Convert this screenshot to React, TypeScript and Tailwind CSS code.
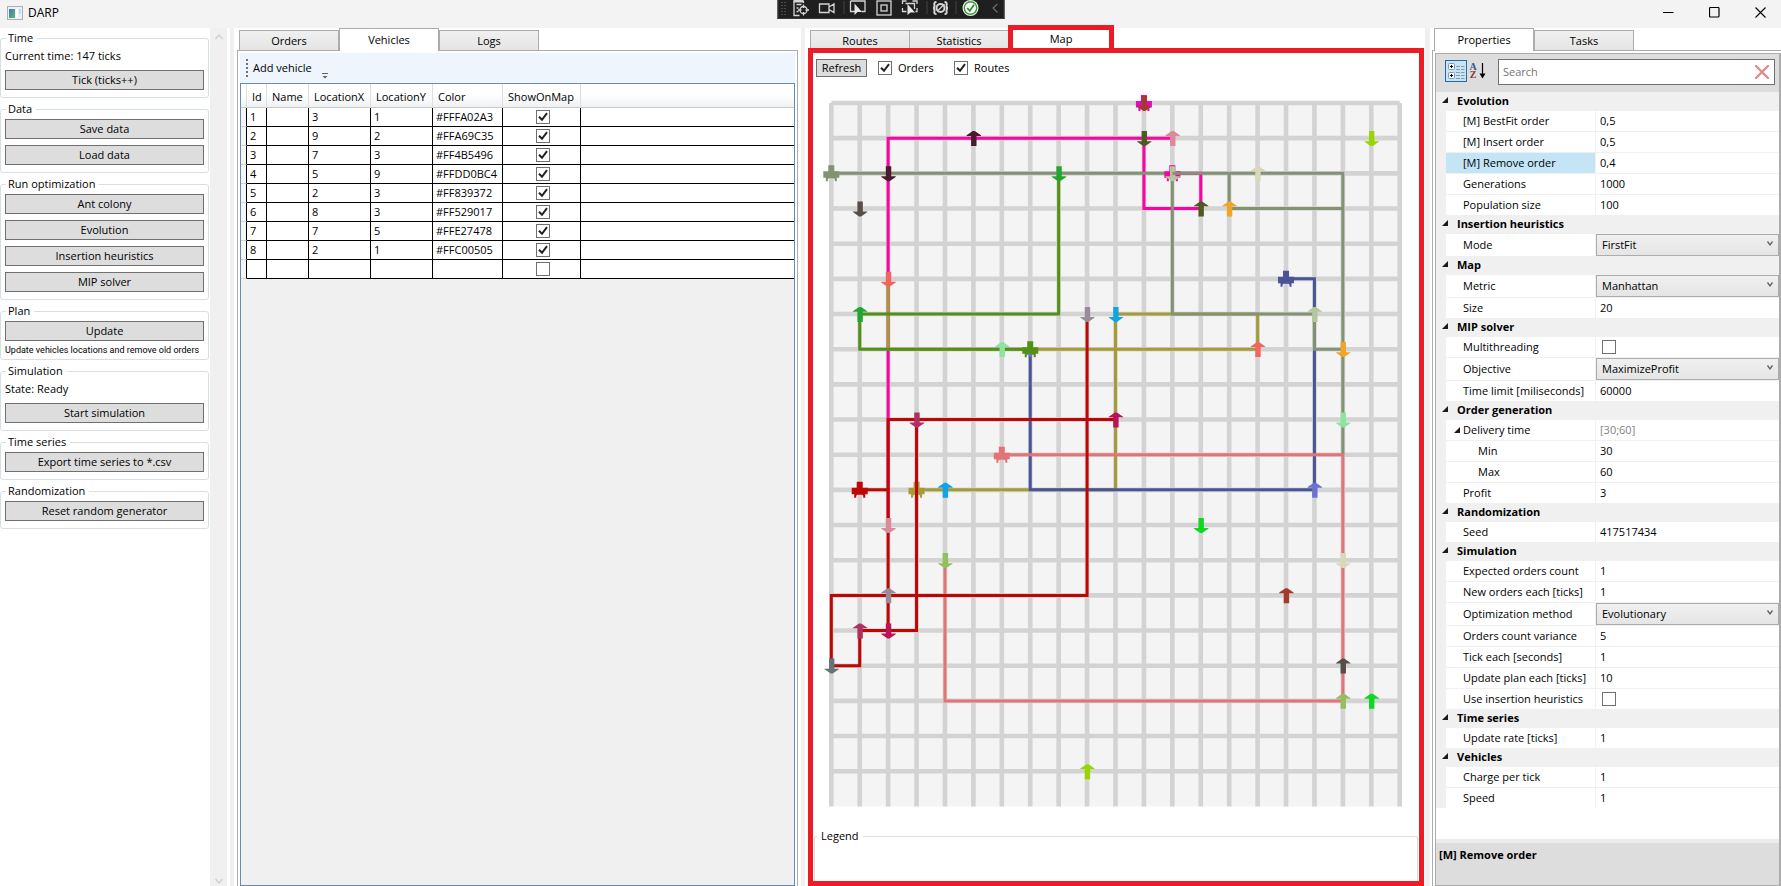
import React, { useId, useState } from "react";

/* ---------- small shared controls ---------- */

function Check({ checked = false, label }: { checked?: boolean; label: string }) {
  const [on, setOn] = useState(checked);
  return (
    <span className="grid h-[14px] w-[14px] shrink-0 place-items-center">
      <input
        type="checkbox"
        aria-label={label}
        checked={on}
        onChange={() => setOn(!on)}
        className="col-start-1 row-start-1 h-[14px] w-[14px] appearance-none border border-[#707070] bg-white"
      />
      {on && (
        <svg viewBox="0 0 14 14" className="pointer-events-none col-start-1 row-start-1 h-[14px] w-[14px]">
          <path d="M3 6.8 L6 9.8 L11 3.2" fill="none" stroke="#212121" strokeWidth="2" />
        </svg>
      )}
    </span>
  );
}

function Btn({ children }: { children: React.ReactNode }) {
  return (
    <button className="block h-5 w-full border border-[#707070] bg-[#dddddd] text-center leading-[18px]">
      {children}
    </button>
  );
}

function Group({ title, children }: { title: string; children: React.ReactNode }) {
  return (
    <fieldset className="mb-[3px] rounded-[3px] border border-[#d5dfe5] px-1 pb-[7px]">
      <legend className="ml-px pl-[2px] pr-1 leading-4">{title}</legend>
      <div className="flex flex-col gap-[6px] pt-[2px]">{children}</div>
    </fieldset>
  );
}

function Tab({ children, active = false }: { children: React.ReactNode; active?: boolean }) {
  return (
    <button
      role="tab"
      aria-selected={active}
      className={
        active
          ? "relative z-10 -mb-px h-[23px] w-[100px] border border-b-0 border-[#acacac] bg-white"
          : "h-5 w-[100px] border border-b-0 border-[#acacac] bg-gradient-to-b from-[#f0f0f0] to-[#e5e5e5] pt-px"
      }
    >
      {children}
    </button>
  );
}

/* ---------- title bar ---------- */

function DebugToolbar() {
  const line = { fill: "none", stroke: "#d6d6d6", strokeWidth: 1.3 };
  return (
    <div className="absolute left-1/2 top-0 h-[19px] w-[227px] -translate-x-1/2 border border-t-0 border-[#3a3a3a] bg-[#1f1f1f]">
      <svg viewBox="0 0 225 18" className="h-[18px] w-full">
        {[3, 6].map((x) =>
          [2, 5, 8, 11, 14].map((y) => <rect key={`${x}-${y}`} x={x} y={y} width="1" height="1" fill="#777" />)
        )}
        <g {...line}>
          <path d="M21 15.5 H15.500 V1 M25 1 V3 M18 4.500 H23 M18 8 H20 M18 11.500 H20" />
          <path d="M15 1 H25" strokeWidth="3" />
          <circle cx="25" cy="10" r="3.500" />
          <path d="M25 4.500 V8 M25 12 V15.500 M19.500 10 H23 M27 10 H30.500" />
          <path d="M41 4 H50.500 V12.500 H41 Z M50.500 7 L55.500 4 V12.500 L50.500 9.500" />
          <path d="M77 11.500 H72 V1 M72 1 H86.500 V11.500 H83" />
          <rect x="98.500" y="1" width="14" height="14" />
          <rect x="102.500" y="5" width="6" height="6" />
          <path d="M124 4 V1 H128 M134 1 H138.500 V4 M124 8 V11.500 H128 M137 11.500 H138.500 V8 M127 3.500 H136 V9" />
          <path d="M158 2 Q155 2 156 5.500 Q156 8 154.500 8 Q156 8 156 11 Q155 14 158 14 M166 2 Q169 2 168 5.500 Q168 8 169.500 8 Q168 8 168 11 Q169 14 166 14" strokeWidth="2" />
          <circle cx="162" cy="8" r="4" strokeWidth="2" />
          <path d="M159 11 L166 4" />
        </g>
        <path d="M76 3.500 V15 L79 12 L83.500 12 Z M129 4 V15 L132 12.500 L136.500 12.500 Z" fill="#e6e6e6" />
        <path d="M65.500 1 V14 M148.500 1 V14 M177.500 1 V14" stroke="#444" />
        <circle cx="192" cy="8" r="8" fill="#e9f5e9" />
        <circle cx="192" cy="8" r="6.200" fill="#f6fbf6" stroke="#3c9a3c" strokeWidth="1.400" />
        <path d="M188.700 8 L191.300 10.900 L195.500 4.800" fill="none" stroke="#2f8f2f" strokeWidth="1.800" />
        <path d="M219 4 L214.500 8 L219 12.500" fill="none" stroke="#6a6a6a" strokeWidth="1.200" />
      </svg>
    </div>
  );
}

function TitleBar() {
  return (
    <header className="relative flex h-7 shrink-0 items-center bg-[#f3f3f3] pb-[3px] pl-[7px] pr-[15px]">
      <svg viewBox="0 0 16 14" className="mr-[5px] h-[14px] w-4">
        <defs>
          <linearGradient id="app-pane" x1="0" y1="0" x2="1" y2="1">
            <stop offset="0" stopColor="#3d79b8" />
            <stop offset="1" stopColor="#63b86e" />
          </linearGradient>
        </defs>
        <rect x="0.500" y="0.500" width="15" height="13" fill="#eef1f3" stroke="#a9b0b5" />
        <rect x="2" y="3" width="6" height="9" fill="url(#app-pane)" />
        <rect x="9" y="3" width="2" height="9" fill="#ffffff" />
        <rect x="12" y="3" width="2" height="5" fill="#c3dcec" />
      </svg>
      <h1 className="text-[12px]">DARP</h1>
      <DebugToolbar />
      <div className="ml-auto flex items-center gap-[35px]">
        <button aria-label="Minimize">
          <svg viewBox="0 0 11 11" className="h-[11px] w-[11px]"><path d="M0 5.500 H10.500" stroke="#000" /></svg>
        </button>
        <button aria-label="Maximize">
          <svg viewBox="0 0 11 11" className="h-[11px] w-[11px]">
            <rect x="0.500" y="0.500" width="9.500" height="9.500" rx="1" fill="none" stroke="#000" strokeWidth="1.200" />
          </svg>
        </button>
        <button aria-label="Close">
          <svg viewBox="0 0 11 11" className="h-[11px] w-[11px]">
            <path d="M0.500 0.500 L10.500 10.500 M10.500 0.500 L0.500 10.500" stroke="#000" strokeWidth="1.100" />
          </svg>
        </button>
      </div>
    </header>
  );
}

/* ---------- left sidebar ---------- */

function Sidebar() {
  return (
    <aside className="flex">
      <div className="w-[210px] pr-px pt-[2px]">
        <Group title="Time">
          <p className="leading-4">Current time: 147 ticks</p>
          <Btn>Tick (ticks++)</Btn>
        </Group>
        <Group title="Data">
          <Btn>Save data</Btn>
          <Btn>Load data</Btn>
        </Group>
        <Group title="Run optimization">
          <Btn>Ant colony</Btn>
          <Btn>Evolution</Btn>
          <Btn>Insertion heuristics</Btn>
          <Btn>MIP solver</Btn>
        </Group>
        <fieldset className="mb-[3px] min-w-0 rounded-[3px] border border-[#d5dfe5] px-1 pb-[2px]">
          <legend className="ml-px pl-[2px] pr-1 leading-4">Plan</legend>
          <div className="flex flex-col gap-[2px] pt-[2px]">
            <Btn>Update</Btn>
            <p className="whitespace-nowrap font-['Roboto',sans-serif] text-[9px] leading-[14px]">
              Update vehicles locations and remove old orders
            </p>
          </div>
        </fieldset>
        <Group title="Simulation">
          <p className="leading-4">State: Ready</p>
          <Btn>Start simulation</Btn>
        </Group>
        <Group title="Time series">
          <Btn>Export time series to *.csv</Btn>
        </Group>
        <Group title="Randomization">
          <Btn>Reset random generator</Btn>
        </Group>
      </div>
      <div className="flex w-[17px] flex-col items-center justify-between bg-[#f0f0f0] pb-[2px] pt-[6px]">
        <svg viewBox="0 0 8 6" className="h-[6px] w-2"><path d="M0.500 5 L4 1 L7.500 5" fill="none" stroke="#cfcfcf" strokeWidth="1.300" /></svg>
        <svg viewBox="0 0 8 6" className="h-[6px] w-2"><path d="M0.500 1 L4 5 L7.500 1" fill="none" stroke="#cfcfcf" strokeWidth="1.300" /></svg>
      </div>
    </aside>
  );
}

/* ---------- vehicles table ---------- */

const vehicles = [
  { id: 1, x: 3, y: 1, color: "#FFFA02A3" },
  { id: 2, x: 9, y: 2, color: "#FFA69C35" },
  { id: 3, x: 7, y: 3, color: "#FF4B5496" },
  { id: 4, x: 5, y: 9, color: "#FFDD0BC4" },
  { id: 5, x: 2, y: 3, color: "#FF839372" },
  { id: 6, x: 8, y: 3, color: "#FF529017" },
  { id: 7, x: 7, y: 5, color: "#FFE27478" },
  { id: 8, x: 2, y: 1, color: "#FFC00505" },
];

const cell = "h-[19px] overflow-hidden whitespace-nowrap border-b border-r border-black bg-white pl-[3px] leading-[18px]";
const rowHead = "border-b border-r border-b-[#d5d5d5] border-r-black bg-[#f6f6f6]";
const head = "h-[24px] border-b border-r border-b-[#c9caca] border-r-[#dedede] bg-gradient-to-b from-white from-45% to-[#eff1f3] pl-[5px] pt-1 text-left font-normal";

function VehiclesPanel() {
  return (
    <section className="flex min-w-0 flex-col px-[3px]">
      <div role="tablist" className="flex h-[22px] items-end pl-[2px]">
        <Tab>Orders</Tab>
        <Tab active>Vehicles</Tab>
        <Tab>Logs</Tab>
      </div>
      <div className="flex min-h-0 flex-1 flex-col border border-b-0 border-[#acacac] px-[2px] pt-[2px]">
        <div className="flex h-[30px] shrink-0 items-center bg-[#eef5fd] pl-[6px]">
          <svg viewBox="0 0 2 18" className="mr-[5px] h-[18px] w-[2px]">
            <path d="M1 0 V18" stroke="#707070" strokeWidth="2" strokeDasharray="2 2" />
          </svg>
          <button>Add vehicle</button>
          <svg viewBox="0 0 6 6" className="ml-[10px] mt-4 h-[6px] w-[6px]">
            <path d="M0 0.500 H6" stroke="#606060" />
            <path d="M0.500 3 H5.500 L3 5.500 Z" fill="#606060" />
          </svg>
        </div>
        <div className="min-h-0 flex-1 border border-[#688caf] bg-[#f0f0f0]">
          <table className="w-full table-fixed border-separate border-spacing-0">
            <colgroup>
              <col className="w-[6px]" />
              <col className="w-5" />
              <col className="w-[42px]" />
              <col className="w-[62px]" />
              <col className="w-[62px]" />
              <col className="w-[70px]" />
              <col className="w-[78px]" />
              <col />
            </colgroup>
            <thead>
              <tr>
                <th className={head} />
                {["Id", "Name", "LocationX", "LocationY", "Color", "ShowOnMap"].map((h) => (
                  <th key={h} className={head}>{h}</th>
                ))}
                <th className="border-b border-[#c9caca] bg-gradient-to-b from-white from-45% to-[#eff1f3]" />
              </tr>
            </thead>
            <tbody>
              {vehicles.map((v) => (
                <tr key={v.id}>
                  <td className={rowHead} />
                  <td className={cell}>{v.id}</td>
                  <td className={cell} />
                  <td className={cell}>{v.x}</td>
                  <td className={cell}>{v.y}</td>
                  <td className={cell}>{v.color}</td>
                  <td className={cell}>
                    <div className="flex justify-center"><Check checked label={`Show vehicle ${v.id} on map`} /></div>
                  </td>
                  <td className="border-b border-black bg-white" />
                </tr>
              ))}
              <tr>
                <td className={rowHead} />
                <td className={cell} />
                <td className={cell} />
                <td className={cell} />
                <td className={cell} />
                <td className={cell} />
                <td className={cell}>
                  <div className="flex justify-center"><Check label="Show new vehicle on map" /></div>
                </td>
                <td className="border-b border-black bg-white" />
              </tr>
            </tbody>
          </table>
        </div>
      </div>
    </section>
  );
}

/* ---------- map ---------- */

const STEP_X = 28.42;
const STEP_Y = 35.17;
const px = (c: number) => 18.3 + c * STEP_X;
const py = (r: number) => 20 + r * STEP_Y;

type Pt = [number, number];
const routes: { color: string; paths: Pt[][] }[] = [
  { color: "#fa02a3", paths: [[[12, 2], [13, 2], [13, 3], [11, 3], [11, 1]], [[12, 1], [2, 1], [2, 12]]] },
  { color: "#a69c35", paths: [[[3, 11], [10, 11], [10, 6], [15, 6], [15, 7], [2, 7], [2, 5]]] },
  { color: "#4b5496", paths: [[[16, 5], [17, 5], [17, 11], [7, 11], [7, 7]]] },
  { color: "#839372", paths: [[[0, 2], [18, 2], [18, 10]], [[14, 2], [14, 3], [18, 3]], [[12, 2], [12, 6], [17, 6], [17, 7], [18, 7]]] },
  { color: "#529017", paths: [[[7, 7], [1, 7], [1, 6], [8, 6], [8, 2]]] },
  { color: "#e27478", paths: [[[6, 10], [18, 10], [18, 17], [4, 17], [4, 13]]] },
  { color: "#c00505", paths: [[[1, 11], [2, 11], [2, 15]], [[2, 11], [2, 9], [10, 9]], [[3, 9], [3, 15], [1, 15], [1, 16], [0, 16], [0, 14], [9, 14], [9, 6]]] },
];

const cars: [number, number, string][] = [
  [11, 0, "#dd0bc4"], [0, 2, "#839372"], [12, 2, "#fa02a3"], [16, 5, "#4b5496"],
  [7, 7, "#529017"], [6, 10, "#e27478"], [1, 11, "#c00505"], [3, 11, "#a69c35"],
];

const orders: [number, number, "u" | "d", string][] = [
  [11, 0, "d", "#a33b2b"], [16, 14, "u", "#a33b2b"],
  [5, 1, "u", "#4a1a2e"], [2, 2, "d", "#4a1a2e"],
  [1, 3, "d", "#574d49"], [18, 16, "u", "#574d49"],
  [11, 1, "d", "#4e5a22"], [13, 3, "u", "#4e5a22"],
  [12, 1, "u", "#db8a97"], [2, 12, "d", "#db8a97"],
  [14, 3, "u", "#f0a42a"], [18, 7, "d", "#f0a42a"],
  [15, 2, "u", "#d9d8b8"], [18, 13, "d", "#d9d8b8"],
  [19, 1, "d", "#97d504"], [9, 19, "u", "#97d504"],
  [8, 2, "d", "#23a62f"], [1, 6, "u", "#23a62f"],
  [2, 5, "d", "#f4645f"], [15, 7, "u", "#f4645f"],
  [6, 7, "u", "#8de3a0"], [18, 9, "d", "#8de3a0"],
  [9, 6, "d", "#988c9b"], [2, 14, "u", "#988c9b"],
  [10, 6, "d", "#0da5e3"], [4, 11, "u", "#0da5e3"],
  [12, 2, "d", "#b2c79b"], [17, 6, "u", "#b2c79b"],
  [3, 9, "d", "#af3060"], [1, 15, "u", "#af3060"],
  [10, 9, "u", "#bc1259"], [2, 15, "d", "#bc1259"],
  [4, 13, "d", "#94bf5f"], [18, 17, "u", "#94bf5f"],
  [0, 16, "d", "#677477"],
  [13, 12, "d", "#0fd823"], [19, 17, "u", "#0fd823"],
  [17, 11, "u", "#6a72d0"],
];

const lines = Array.from({ length: 21 }, (_, i) => i);

function CityMap() {
  return (
    <svg viewBox="0 0 606 745" preserveAspectRatio="xMidYMin meet" className="min-h-0 w-full flex-1" role="img" aria-label="City map">
      <rect x={px(0)} y={py(0)} width={20 * STEP_X} height={20 * STEP_Y} fill="#f4f4f4" />
      <g stroke="#d3d3d3" strokeWidth="4.6">
        {lines.map((i) => <path key={`v${i}`} d={`M${px(i)} ${py(0)} V${py(20)}`} />)}
        {lines.slice(0, 20).map((i) => <path key={`h${i}`} d={`M${px(0)} ${py(i)} H${px(20)}`} />)}
      </g>
      <g fill="none" strokeWidth="3">
        {routes.map((r) =>
          r.paths.map((p, i) => (
            <polyline key={r.color + i} stroke={r.color} points={p.map(([c, w]) => `${px(c)},${py(w)}`).join(" ")} />
          ))
        )}
      </g>
      {cars.map(([c, r, color]) => (
        <path
          key={`car${c}-${r}`}
          transform={`translate(${px(c)} ${py(r)})`}
          fill={color}
          d="M-3 -8 H3 V-2 H8 V4.500 H5.500 V8 H3.500 V6 L2.500 5 H-2.500 L-3.500 6 V8 H-5.500 V4.500 H-8 V-2 H-3 Z"
        />
      ))}
      <path d={`M${px(3)} ${py(10.7)} V${py(11.3)}`} stroke="#c00505" strokeWidth="3" />
      <path transform={`translate(${px(7)} ${py(7)})`} fill="#6a72d0" d="M-3 5 H3 L0 8 Z" />
      {orders.map(([c, r, dir, color]) => (
        <path
          key={`o${c}-${r}-${dir}`}
          transform={`translate(${px(c) + 0.4} ${py(r) + 0.4})`}
          fill={color}
          d={
            dir === "u"
              ? "M-1 -7.500 H1 L7.200 -3.200 V-2.600 H2.700 V7.500 H-2.700 V-2.600 H-7.200 V-3.200 Z"
              : "M-1 7.500 H1 L7.200 3.200 V2.600 H2.700 V-7.500 H-2.700 V2.600 H-7.200 V3.200 Z"
          }
        />
      ))}
      <path d={`M${px(12)} ${py(2)} H${px(12) + 8}`} stroke="#839372" strokeWidth="3" />
    </svg>
  );
}

function MapPanel() {
  return (
    <section className="flex min-w-0 flex-col pl-[3px] pr-px">
      <div role="tablist" className="flex h-5 items-end pl-[2px]">
        <button role="tab" className="h-[18px] w-[100px] border border-b-0 border-[#acacac] bg-gradient-to-b from-[#f0f0f0] to-[#e5e5e5] pt-[2px]">Routes</button>
        <button role="tab" className="h-[18px] w-[98px] border-t border-[#acacac] bg-gradient-to-b from-[#f0f0f0] to-[#e5e5e5] pt-[2px]">Statistics</button>
        <button role="tab" aria-selected className="relative h-[23px] w-[106px] border-[5px] border-b-0 border-[#ed1c24] bg-white pt-px">Map</button>
      </div>
      <div className="flex min-h-0 flex-1 flex-col border-[5px] border-[#ed1c24]">
        <div className="flex h-[30px] shrink-0 items-center pl-[3px]">
          <button className="h-[18px] w-[51px] border border-[#707070] bg-[#dddddd] leading-4">Refresh</button>
          <label className="ml-[11px] flex w-[76px] items-center gap-[6px]">
            <Check checked label="Orders" />
            Orders
          </label>
          <label className="flex items-center gap-[6px]">
            <Check checked label="Routes" />
            Routes
          </label>
        </div>
        <CityMap />
        <fieldset className="mx-px h-[53px] shrink-0 rounded-t-[3px] border border-b-0 border-[#d5dfe5]">
          <legend className="ml-[2px] px-1 leading-4">Legend</legend>
        </fieldset>
      </div>
    </section>
  );
}

/* ---------- properties ---------- */

type Prop = { label: string; value?: string; kind?: "select" | "check" | "parent"; indent?: boolean; selected?: boolean };
const groups: { name: string; rows: Prop[] }[] = [
  {
    name: "Evolution",
    rows: [
      { label: "[M] BestFit order", value: "0,5" },
      { label: "[M] Insert order", value: "0,5" },
      { label: "[M] Remove order", value: "0,4", selected: true },
      { label: "Generations", value: "1000" },
      { label: "Population size", value: "100" },
    ],
  },
  { name: "Insertion heuristics", rows: [{ label: "Mode", value: "FirstFit", kind: "select" }] },
  { name: "Map", rows: [{ label: "Metric", value: "Manhattan", kind: "select" }, { label: "Size", value: "20" }] },
  {
    name: "MIP solver",
    rows: [
      { label: "Multithreading", kind: "check" },
      { label: "Objective", value: "MaximizeProfit", kind: "select" },
      { label: "Time limit [miliseconds]", value: "60000" },
    ],
  },
  {
    name: "Order generation",
    rows: [
      { label: "Delivery time", value: "[30;60]", kind: "parent" },
      { label: "Min", value: "30", indent: true },
      { label: "Max", value: "60", indent: true },
      { label: "Profit", value: "3" },
    ],
  },
  { name: "Randomization", rows: [{ label: "Seed", value: "417517434" }] },
  {
    name: "Simulation",
    rows: [
      { label: "Expected orders count", value: "1" },
      { label: "New orders each [ticks]", value: "1" },
      { label: "Optimization method", value: "Evolutionary", kind: "select" },
      { label: "Orders count variance", value: "5" },
      { label: "Tick each [seconds]", value: "1" },
      { label: "Update plan each [ticks]", value: "10" },
      { label: "Use insertion heuristics", kind: "check" },
    ],
  },
  { name: "Time series", rows: [{ label: "Update rate [ticks]", value: "1" }] },
  { name: "Vehicles", rows: [{ label: "Charge per tick", value: "1" }, { label: "Speed", value: "1" }] },
];

function Expander({ className }: { className: string }) {
  return (
    <svg viewBox="0 0 6 6" className={className}><path d="M6 0 V6 H0 Z" fill="#1a1a1a" /></svg>
  );
}

function PropRow({ row }: { row: Prop }) {
  const id = useId();
  return (
    <div className={`flex gap-px ${row.kind === "select" ? "h-[22px]" : "h-5"}`}>
      <label
        htmlFor={id}
        className={`flex w-[149px] shrink-0 items-center whitespace-nowrap ${row.selected ? "bg-[#c4e5f6]" : "bg-white"} ${row.indent ? "pl-8" : row.kind === "parent" ? "pl-2" : "pl-[17px]"}`}
      >
        {row.kind === "parent" && <Expander className="mr-[3px] h-[6px] w-[6px]" />}
        {row.label}
      </label>
      {row.kind === "select" ? (
        <div className="grid flex-1 items-center">
          <select id={id} className="col-start-1 row-start-1 h-[22px] w-full appearance-none border border-[#acacac] bg-gradient-to-b from-[#f0f0f0] to-[#e5e5e5] pl-[5px]">
            <option>{row.value}</option>
          </select>
          <svg viewBox="0 0 6 5" className="pointer-events-none col-start-1 row-start-1 mb-1 mr-[6px] h-[5px] w-[6px] justify-self-end">
            <path d="M0.500 0.500 L3 3.800 L5.500 0.500" fill="none" stroke="#606060" strokeWidth="1.300" />
          </svg>
        </div>
      ) : row.kind === "check" ? (
        <div className="flex flex-1 items-center bg-white pl-[6px]">
          <Check label={row.label} />
        </div>
      ) : (
        <input
          id={id}
          defaultValue={row.value}
          readOnly={row.kind === "parent"}
          className={`min-w-0 flex-1 bg-white pl-1 outline-none ${row.kind === "parent" ? "text-[#838383]" : ""}`}
        />
      )}
    </div>
  );
}

function PropertiesPanel() {
  return (
    <section className="flex min-w-0 flex-col pl-[2px]">
      <div role="tablist" className="flex h-[22px] items-end pl-[2px]">
        <Tab active>Properties</Tab>
        <Tab>Tasks</Tab>
      </div>
      <div className="flex min-h-0 flex-1 flex-col border-l border-t border-[#acacac] pl-[2px] pt-[2px]">
        <div className="flex min-h-0 flex-1 flex-col border border-r-2 border-[#acacac]">
          <div className="flex h-[38px] shrink-0 items-start bg-[#dddddd] pl-[9px] pr-1 pt-[5px]">
            <button aria-label="Categorized" className="mt-px h-[22px] w-[22px] border border-[#26699e] bg-[#c4e5f6]">
              <svg viewBox="0 0 20 20" className="h-5 w-5">
                {[3, 12].map((y) => (
                  <g key={y}>
                    <rect x="2.500" y={y - 0.5} width="6" height="6" rx="1" fill="#fff" stroke="#7b97bd" />
                    <path d={`M4 ${y + 2.5} H7 M5.500 ${y + 1} V${y + 4}`} stroke="#000" />
                  </g>
                ))}
                <path d="M10 5.500 H14 M15 5.500 H18.500 M10 8.500 H14 M15 8.500 H18.500 M10 14.500 H14 M15 14.500 H18.500 M10 17.500 H14 M15 17.500 H18.500 M10 11.500 H14 M15 11.500 H18.500" stroke="#8a98a8" />
              </svg>
            </button>
            <button aria-label="Alphabetical" className="ml-[2px] mt-px flex h-[22px] items-center">
              <span className="flex w-2 flex-col text-center font-['Liberation_Serif',serif] text-[10px] font-bold leading-2">
                <span className="text-[#35558f]">A</span>
                <span className="text-[#8f3434]">Z</span>
              </span>
              <svg viewBox="0 0 7 16" className="ml-[2px] h-4 w-[7px]">
                <path d="M3.500 0 V12" stroke="#000" strokeWidth="1.200" />
                <path d="M0.500 10.500 H6.500 L3.500 15.500 Z" fill="#000" />
              </svg>
            </button>
            <div className="ml-3 flex h-[26px] min-w-0 flex-1 items-center border border-[#707070] bg-white pl-1 pr-[5px]">
              <input aria-label="Search" placeholder="Search" className="min-w-0 flex-1 outline-none placeholder:text-[#757575]" />
              <button aria-label="Clear search">
                <svg viewBox="0 0 14 14" className="h-[14px] w-[14px]">
                  <path d="M1 1 L13 13 M13 1 L1 13" stroke="#e08b8b" strokeWidth="2.400" strokeLinecap="round" />
                </svg>
              </button>
            </div>
          </div>
          <div className="flex min-h-0 flex-1 flex-col overflow-hidden">
            {groups.map((g) => (
              <div key={g.name} className="bg-[#f0f0f0]">
                <h2 className="flex h-[19px] items-center pl-[6px] font-bold">
                  <Expander className="mb-[3px] mr-[9px] h-[6px] w-[6px]" />
                  {g.name}
                </h2>
                <div className="flex flex-col gap-px pl-[10px]">
                  {g.rows.map((r) => <PropRow key={r.label} row={r} />)}
                </div>
              </div>
            ))}
          </div>
          <div className="h-[46px] shrink-0 border-t-4 border-[#ececec] bg-[#dddddd] pl-[3px] pt-1">
            <h2 className="font-bold leading-4">[M] Remove order</h2>
          </div>
        </div>
      </div>
    </section>
  );
}

export default function App() {
  return (
    <div className="flex h-screen flex-col overflow-hidden bg-white font-['Open_Sans','Noto_Sans',sans-serif] text-[11px] text-black">
      <TitleBar />
      <main className="grid min-h-0 flex-1 grid-cols-[230px_4px_567fr_4px_620fr_5px_351fr] grid-rows-[minmax(0,1fr)]">
        <Sidebar />
        <div className="bg-[#f0f0f0]" />
        <VehiclesPanel />
        <div className="bg-[#f0f0f0]" />
        <MapPanel />
        <div className="bg-[#f0f0f0]" />
        <PropertiesPanel />
      </main>
    </div>
  );
}
